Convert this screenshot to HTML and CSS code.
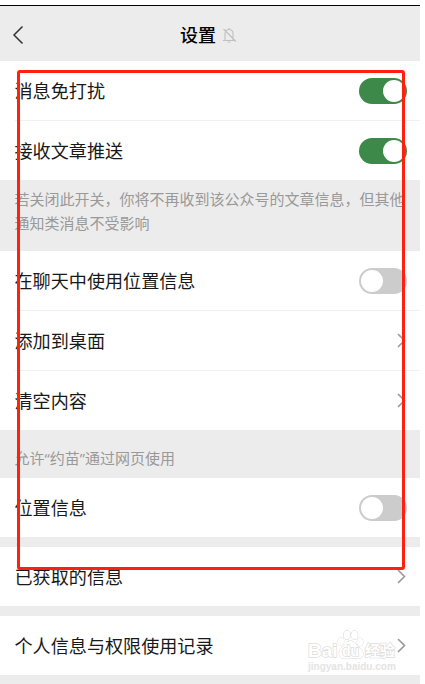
FILE: index.html
```html
<!DOCTYPE html>
<html lang="zh-CN">
<head>
    <meta charset="UTF-8">
    <meta name="viewport" content="width=device-width, initial-scale=1.0">
    <title>设置</title>
    <link rel="stylesheet" href="styles.css">
</head>
<body>
    <div class="page">
        <header class="header">
            <svg class="back" width="12" height="20" viewBox="0 0 12 20"><path d="M10.500 1.500L2 10l8.500 8.500"/></svg>
            <h1>设置</h1>
            <svg class="bell" width="16" height="16" viewBox="0 0 16 16">
                <path d="M1 13.500h11.500M3 13V7C3 4 4.500 2.500 7 2.500S11 4 11 7v6M7 2.500V1M5.500 15h3M1.500 2l12.500 12.500"/>
            </svg>
        </header>

        <section class="list">
            <div class="row"><span class="label">消息免打扰</span><span class="switch on"></span></div>
            <div class="row"><span class="label">接收文章推送</span><span class="switch on"></span></div>
        </section>

        <p class="note">若关闭此开关，你将不再收到该公众号的文章信息，但其他通知类消息不受影响</p>

        <section class="list">
            <div class="row"><span class="label">在聊天中使用位置信息</span><span class="switch"></span></div>
            <div class="row"><span class="label">添加到桌面</span><svg class="arrow" width="9" height="15" viewBox="0 0 9 15"><path d="M1 1l6.500 6.500L1 14"/></svg></div>
            <div class="row"><span class="label">清空内容</span><svg class="arrow" width="9" height="15" viewBox="0 0 9 15"><path d="M1 1l6.500 6.500L1 14"/></svg></div>
        </section>

        <p class="caption">允许“约苗”通过网页使用</p>

        <section class="list">
            <div class="row"><span class="label">位置信息</span><span class="switch"></span></div>
        </section>

        <section class="list gap">
            <div class="row"><span class="label">已获取的信息</span><svg class="arrow" width="9" height="15" viewBox="0 0 9 15"><path d="M1 1l6.500 6.500L1 14"/></svg></div>
        </section>

        <section class="list gap">
            <div class="row"><span class="label">个人信息与权限使用记录</span><svg class="arrow" width="9" height="15" viewBox="0 0 9 15"><path d="M1 1l6.500 6.500L1 14"/></svg></div>
        </section>

        <div class="frame"></div>

        <div class="watermark">
            <svg class="paw" width="27" height="30" viewBox="0 0 27 30">
                <ellipse cx="4" cy="11.500" rx="3" ry="4"/>
                <ellipse cx="10" cy="5" rx="3.300" ry="4.300"/>
                <ellipse cx="17.500" cy="5" rx="3.300" ry="4.300"/>
                <ellipse cx="23" cy="12" rx="3" ry="4"/>
                <path d="M13.500 11c-4 0-4.500 4-8.500 6.500S1 28 6 28.500s9-.5 15 0 6.500-7 2-10.500-5-7-9.500-7z"/>
            </svg>
            <div class="brand"><span class="bai">Bai</span><span class="du">du</span><span class="jy">经验</span></div>
            <div class="site">jingyan.baidu.com</div>
        </div>
    </div>
</body>
</html>
```

FILE: styles.css
```css
body {
    margin: 0;
    background: #fff;
    font-family: "Noto Sans CJK SC", sans-serif;
    color: #191919;
}

.page {
    position: relative;
    box-sizing: border-box;
    width: 420px;
    height: 684px;
    padding-top: 5px;
    overflow: hidden;
    background: linear-gradient(#fff 5px, #ececec 5px);
}

.header {
    display: flex;
    align-items: center;
    box-sizing: border-box;
    height: 56px;
    padding: 2px 12px 0;
    border-top: 1px solid #000;
}

.header h1 {
    margin: 0 6px 0 156px;
    padding-bottom: 2px;
    font-size: 18px;
    line-height: 26px;
    font-weight: 500;
    color: #000;
}

svg {
    fill: none;
    flex: none;
}

.back {
    stroke: #333;
    stroke-width: 1.5;
}

.bell {
    stroke: #c0c0c0;
    stroke-width: 1.1;
}

.list {
    background: #fff;
}

.gap {
    margin-top: 10px;
}

.row {
    display: flex;
    align-items: center;
    justify-content: space-between;
    height: 59px;
    margin-left: 15px;
    padding-right: 13px;
    font-size: 18.1px;
    line-height: 26px;
}

.row + .row {
    border-top: 1px solid #f0f0f0;
}

.label {
    margin-left: -0.5px;
    padding-bottom: 2px;
}

.switch {
    box-sizing: border-box;
    width: 48px;
    height: 26px;
    padding: 2px;
    border-radius: 13px;
    background: #ccc;
}

.switch::before {
    content: "";
    display: block;
    width: 22px;
    height: 22px;
    border-radius: 50%;
    background: #fff;
}

.switch.on {
    background: #3d8949;
}

.switch.on::before {
    margin-left: auto;
}

.arrow {
    margin-right: 1px;
    stroke: #999;
    stroke-width: 1.6;
}

.note,
.caption {
    box-sizing: border-box;
    margin: 0;
    font-size: 15px;
    line-height: 24px;
    color: #999;
}

.note {
    height: 71px;
    padding: 7px 15px 0 14.5px;
}

.caption {
    height: 48px;
    padding: 16px 15px 0 14.5px;
    font-family: "Open Sans", "Noto Sans CJK SC", sans-serif;
}

/* red highlight over the list */
.frame {
    position: absolute;
    top: 70px;
    left: 17px;
    box-sizing: border-box;
    width: 388px;
    height: 500px;
    border: 3px solid #ff2010;
    border-radius: 3px;
}

.watermark {
    position: absolute;
    top: 630px;
    left: 308px;
    width: 92px;
    font-family: "Liberation Sans", "Noto Sans CJK SC", sans-serif;
    color: #fff;
    -webkit-text-stroke: 1.4px #ddd;
    paint-order: stroke fill;
}

.paw {
    position: absolute;
    left: 29px;
    top: 0;
    fill: #fff;
    stroke: #d8d8d8;
}

.brand {
    position: relative;
    display: flex;
    align-items: center;
    height: 20px;
    padding-top: 11px;
    font-size: 19px;
    font-weight: bold;
    line-height: 20px;
}

.bai {
    width: 34px;
}

.du {
    width: 23px;
    font-size: 14px;
}

.jy {
    font-size: 15px;
}

.site {
    font-size: 10px;
    line-height: 11px;
    font-weight: bold;
    -webkit-text-stroke: 0;
    color: #e4e4e4;
}
```
